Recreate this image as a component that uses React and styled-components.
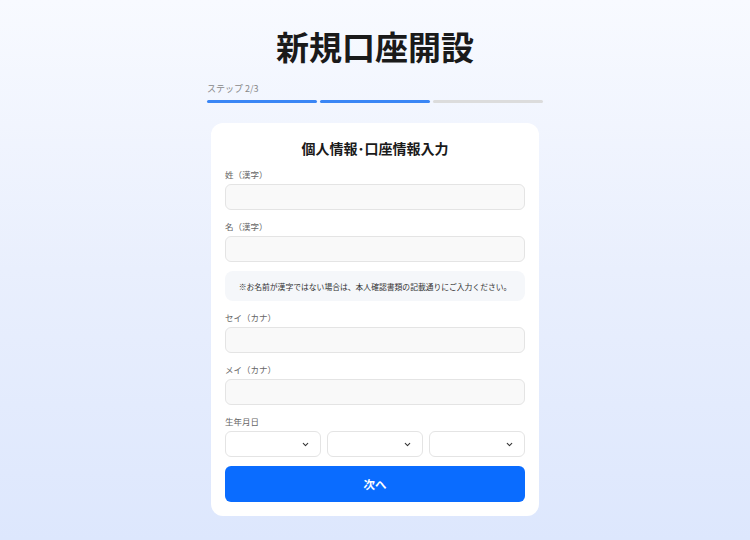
import styled, { createGlobalStyle } from "styled-components";

const GlobalStyle = createGlobalStyle`
  html, body {
    margin: 0;
    padding: 0;
  }
  body {
    font-family: "Noto Sans CJK JP", "Noto Sans", sans-serif;
    background: linear-gradient(180deg, #f8faff 0%, #e9effd 50%, #dde7fd 100%);
    min-height: 540px;
  }
`;

const Page = styled.main`
  min-height: 540px;
  display: flex;
  flex-direction: column;
  align-items: center;
  padding-top: 24px;
  box-sizing: border-box;
`;

const Title = styled.h1`
  margin: 0;
  font-size: 33px;
  line-height: 44px;
  font-weight: 700;
  color: #1a1a1a;
`;

const Progress = styled.div`
  width: 336px;
  margin-top: 14px;
`;

const StepLabel = styled.div`
  font-size: 9px;
  line-height: 14px;
  color: #888;
`;

const Bars = styled.div`
  display: grid;
  grid-template-columns: repeat(3, 1fr);
  gap: 3px;
  margin-top: 4px;
`;

const Bar = styled.div`
  height: 3px;
  border-radius: 2px;
  background: ${(p) => (p.$done ? "#3a86f5" : "#dcdcdc")};
`;

const Card = styled.section`
  width: 328px;
  box-sizing: border-box;
  margin-top: 20px;
  padding: 14px;
  background: #fff;
  border-radius: 12px;
  display: flex;
  flex-direction: column;
`;

const CardTitle = styled.h2`
  margin: 0 0 9px;
  text-align: center;
  font-size: 14px;
  line-height: 22px;
  font-weight: 700;
  color: #1a1a1a;
`;

const Field = styled.div`
  display: flex;
  flex-direction: column;
  gap: 3px;
  margin-bottom: 10px;
`;

const Label = styled.label`
  font-size: 8.5px;
  line-height: 13px;
  color: #666;
`;

const Input = styled.input`
  height: 26px;
  box-sizing: border-box;
  border: 1px solid #e4e4e4;
  border-radius: 6px;
  background: #f9f9f9;
  padding: 0 8px;
  font: inherit;
  outline: none;
`;

const Note = styled.p`
  margin: -1px 0 10px;
  height: 30px;
  display: flex;
  align-items: center;
  justify-content: center;
  background: #f5f7fa;
  border-radius: 8px;
  font-size: 7.8px;
  color: #333;
  font-variant-emoji: text;
`;

const DateRow = styled.div`
  display: grid;
  grid-template-columns: repeat(3, 1fr);
  gap: 6px;
`;

const Select = styled.div`
  height: 26px;
  box-sizing: border-box;
  border: 1px solid #e4e4e4;
  border-radius: 6px;
  background: #fff;
  display: flex;
  align-items: center;
  justify-content: flex-end;
  padding-right: 10px;
  color: #333;
`;

const Button = styled.button`
  margin-top: -1px;
  height: 36px;
  border: none;
  border-radius: 6px;
  background: #0a6cff;
  color: #fff;
  font: inherit;
  font-size: 11.5px;
  font-weight: 700;
`;

const Chevron = () => (
  <svg width="9" height="9" viewBox="0 0 24 24" fill="none" stroke="currentColor" strokeWidth="2.8" strokeLinecap="round" strokeLinejoin="round">
    <path d="M6 9l6 6 6-6" />
  </svg>
);

const nameFields = [
  { id: "sei", label: "姓（漢字）" },
  { id: "mei", label: "名（漢字）" },
];

const kanaFields = [
  { id: "sei-kana", label: "セイ（カナ）" },
  { id: "mei-kana", label: "メイ（カナ）" },
];

export default function App() {
  return (
    <>
      <GlobalStyle />
      <Page>
        <Title>新規口座開設</Title>
        <Progress>
          <StepLabel>ステップ 2/3</StepLabel>
          <Bars>
            <Bar $done />
            <Bar $done />
            <Bar />
          </Bars>
        </Progress>
        <Card>
          <CardTitle>個人情報･口座情報入力</CardTitle>
          {nameFields.map((f) => (
            <Field key={f.id}>
              <Label htmlFor={f.id}>{f.label}</Label>
              <Input id={f.id} />
            </Field>
          ))}
          <Note>※お名前が漢字ではない場合は、本人確認書類の記載通りにご入力ください。</Note>
          {kanaFields.map((f) => (
            <Field key={f.id}>
              <Label htmlFor={f.id}>{f.label}</Label>
              <Input id={f.id} />
            </Field>
          ))}
          <Field>
            <Label>生年月日</Label>
            <DateRow>
              <Select><Chevron /></Select>
              <Select><Chevron /></Select>
              <Select><Chevron /></Select>
            </DateRow>
          </Field>
          <Button type="button">次へ</Button>
        </Card>
      </Page>
    </>
  );
}
